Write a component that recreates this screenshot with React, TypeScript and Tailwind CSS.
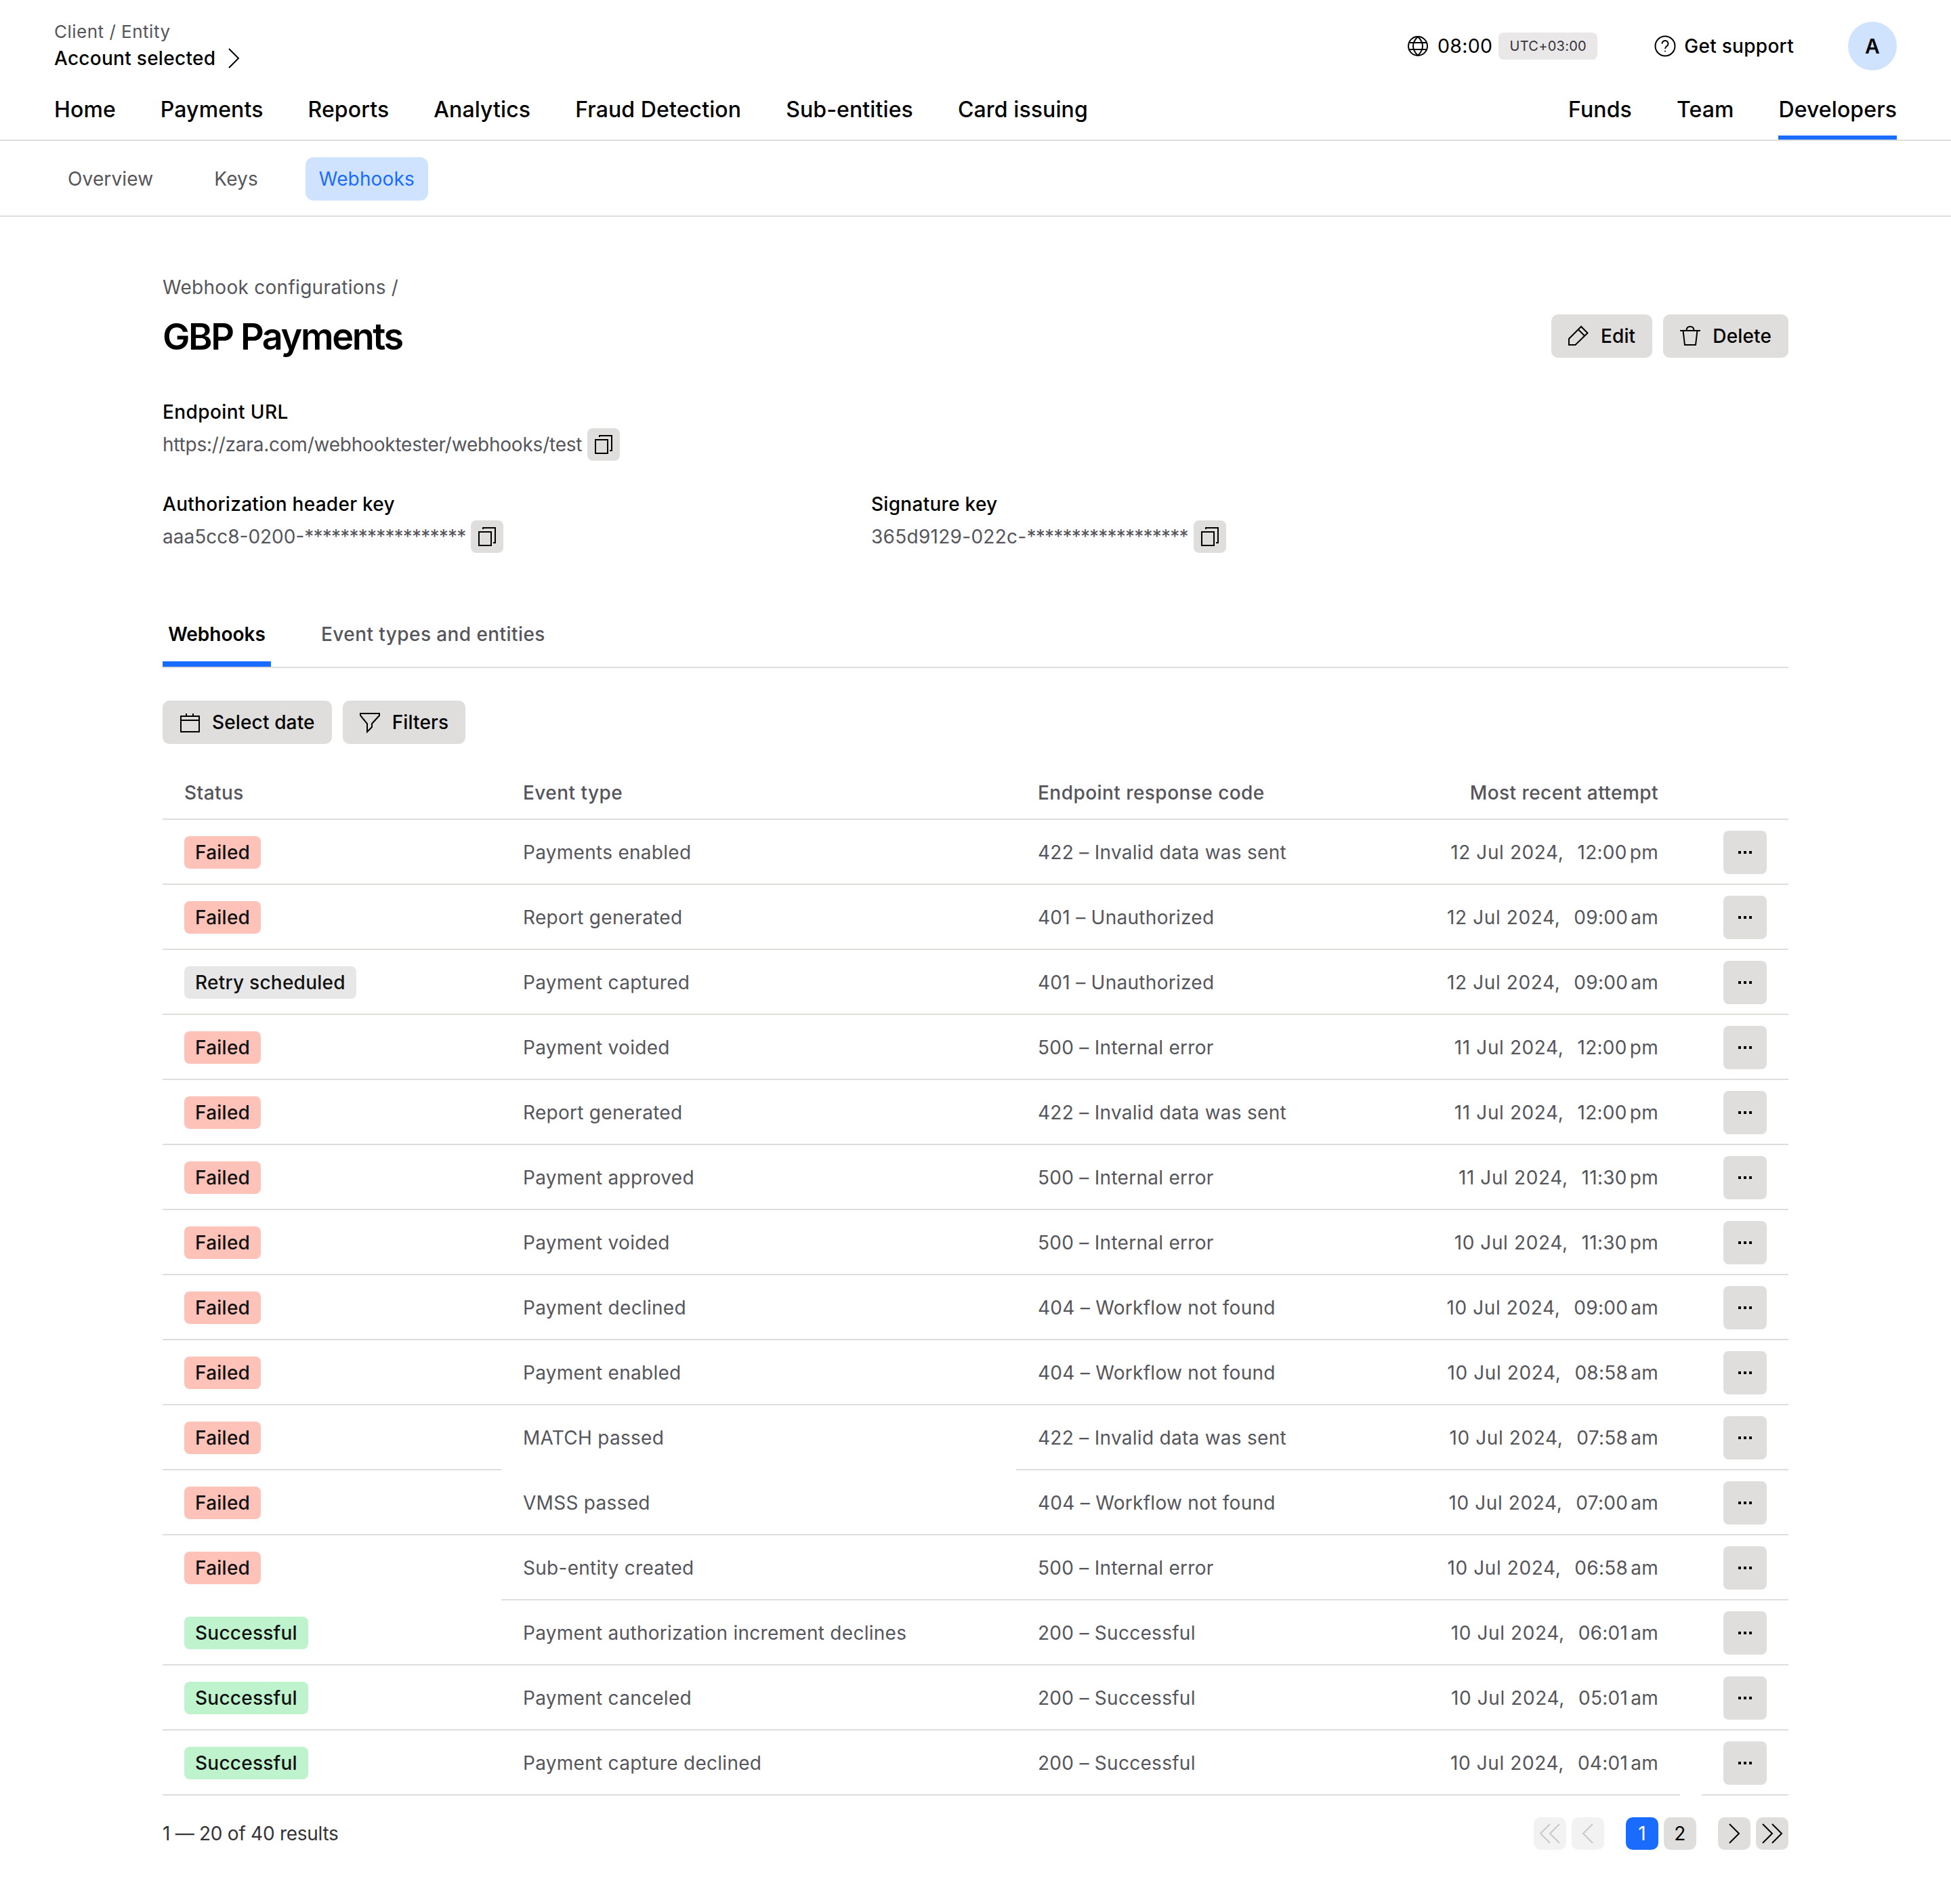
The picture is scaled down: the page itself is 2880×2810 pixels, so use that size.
import React from 'react';

const ChevronRight = ({ className = '' }: { className?: string }) => (
    <svg viewBox="0 0 18 30" fill="none" stroke="currentColor" strokeWidth="2" className={className}>
        <path d="M2 1l14 14L2 29" />
    </svg>
);

const ChevronLeft = ({ className = '' }: { className?: string }) => (
    <svg viewBox="0 0 18 30" fill="none" stroke="currentColor" strokeWidth="2" className={className}>
        <path d="M16 1 2 15l14 14" />
    </svg>
);

const DoubleRight = ({ className = '' }: { className?: string }) => (
    <svg viewBox="0 0 32 30" fill="none" stroke="currentColor" strokeWidth="2" className={className}>
        <path d="M2 1l14 14L2 29M16 1l14 14-14 14" />
    </svg>
);

const DoubleLeft = ({ className = '' }: { className?: string }) => (
    <svg viewBox="0 0 32 30" fill="none" stroke="currentColor" strokeWidth="2" className={className}>
        <path d="M16 1 2 15l14 14M30 1 16 15l14 14" />
    </svg>
);

const CopyIcon = () => (
    <svg viewBox="0 0 32 32" fill="none" stroke="currentColor" strokeWidth="2" className="w-8 h-8 text-black">
        <rect x="4" y="9" width="18" height="20" />
        <path d="M10 5V3h18v22h-3" />
    </svg>
);

const GlobeIcon = () => (
    <svg viewBox="0 0 30 30" fill="none" stroke="currentColor" strokeWidth="2" className="w-[30px] h-[30px]">
        <circle cx="15" cy="15" r="14" />
        <path d="M15 1C10 6 8 10 8 15s2 9 7 14c5-5 7-9 7-14s-2-9-7-14zM2 10h26M2 20h26" />
    </svg>
);

const HelpIcon = () => (
    <svg viewBox="0 0 32 32" fill="none" stroke="currentColor" strokeWidth="2" className="w-8 h-8">
        <circle cx="16" cy="16" r="14.5" />
        <path d="M11.5 12.5a4.5 4.5 0 1 1 7 3.7c-1.6 1-2.5 2-2.5 3.8" />
        <circle cx="16" cy="23.5" r="1" fill="currentColor" stroke="none" />
    </svg>
);

const PencilIcon = () => (
    <svg viewBox="0 0 32 32" fill="none" stroke="currentColor" strokeWidth="2" className="w-8 h-8">
        <path d="M2 20 20 2l9.5 9.5L11.5 29H2zM16 6.5l9 9" />
    </svg>
);

const TrashIcon = () => (
    <svg viewBox="0 0 32 32" fill="none" stroke="currentColor" strokeWidth="2" className="w-8 h-8">
        <path d="M1 8h30M5.5 8l2.5 21h16l2.5-21M10.5 8c0-3.5 2-6 5.5-6s5.5 2.5 5.5 6" />
    </svg>
);

const CalendarIcon = () => (
    <svg viewBox="0 0 32 32" fill="none" stroke="currentColor" strokeWidth="2" className="w-8 h-8">
        <rect x="3" y="7" width="27" height="23" />
        <path d="M3 13h27M11 3v4M21 3v4" />
    </svg>
);

const FunnelIcon = () => (
    <svg viewBox="0 0 32 32" fill="none" stroke="currentColor" strokeWidth="2" className="w-8 h-8">
        <path d="M2 3h28v3L19 18v5l-7 7V18L2 6z" />
    </svg>
);

type Row = { status: string; event: string; code: string; date: string; time: string; ap: string };

const rows: Row[] = [
    { status: 'Failed', event: 'Payments enabled', code: '422 – Invalid data was sent', date: '12 Jul 2024,', time: '12:00', ap: 'pm' },
    { status: 'Failed', event: 'Report generated', code: '401 – Unauthorized', date: '12 Jul 2024,', time: '09:00', ap: 'am' },
    { status: 'Retry scheduled', event: 'Payment captured', code: '401 – Unauthorized', date: '12 Jul 2024,', time: '09:00', ap: 'am' },
    { status: 'Failed', event: 'Payment voided', code: '500 – Internal error', date: '11 Jul 2024,', time: '12:00', ap: 'pm' },
    { status: 'Failed', event: 'Report generated', code: '422 – Invalid data was sent', date: '11 Jul 2024,', time: '12:00', ap: 'pm' },
    { status: 'Failed', event: 'Payment approved', code: '500 – Internal error', date: '11 Jul 2024,', time: '11:30', ap: 'pm' },
    { status: 'Failed', event: 'Payment voided', code: '500 – Internal error', date: '10 Jul 2024,', time: '11:30', ap: 'pm' },
    { status: 'Failed', event: 'Payment declined', code: '404 – Workflow not found', date: '10 Jul 2024,', time: '09:00', ap: 'am' },
    { status: 'Failed', event: 'Payment enabled', code: '404 – Workflow not found', date: '10 Jul 2024,', time: '08:58', ap: 'am' },
    { status: 'Failed', event: 'MATCH passed', code: '422 – Invalid data was sent', date: '10 Jul 2024,', time: '07:58', ap: 'am' },
    { status: 'Failed', event: 'VMSS passed', code: '404 – Workflow not found', date: '10 Jul 2024,', time: '07:00', ap: 'am' },
    { status: 'Failed', event: 'Sub-entity created', code: '500 – Internal error', date: '10 Jul 2024,', time: '06:58', ap: 'am' },
    { status: 'Successful', event: 'Payment authorization increment declines', code: '200 – Successful', date: '10 Jul 2024,', time: '06:01', ap: 'am' },
    { status: 'Successful', event: 'Payment canceled', code: '200 – Successful', date: '10 Jul 2024,', time: '05:01', ap: 'am' },
    { status: 'Successful', event: 'Payment capture declined', code: '200 – Successful', date: '10 Jul 2024,', time: '04:01', ap: 'am' },
];

const badgeClass = (status: string) => {
    if (status === 'Failed') return 'bg-[#ffc2b8]';
    if (status === 'Successful') return 'bg-[#bff3cd]';
    return 'bg-[#e8e7e7]';
};

const leftNav = ['Home', 'Payments', 'Reports', 'Analytics', 'Fraud Detection', 'Sub-entities', 'Card issuing'];

const ActionButton = ({ icon, label }: { icon: React.ReactNode; label: string }) => (
    <button className="h-16 pl-6 pr-[25px] flex items-center gap-[17px] bg-[#dfdedc] rounded-[10px] font-medium tracking-[0.14px] text-black">
        {icon}
        <span>{label}</span>
    </button>
);

const CopyButton = () => (
    <button className="w-12 h-12 flex items-center justify-center bg-[#dfdedc] rounded-[8px]">
        <CopyIcon />
    </button>
);

const PageButton = ({ children, className }: { children: React.ReactNode; className: string }) => (
    <button className={`w-12 h-12 flex items-center justify-center rounded-[10px] ${className}`}>{children}</button>
);

export default function App() {
    return (
        <div className="min-h-[2810px] bg-white text-[28px] leading-10 tracking-[0.01em] text-[#55555c] font-['Inter',sans-serif]">
            {/* Top header */}
            <header className="border-b-2 border-[#dfdedd] px-20">
                <div className="h-[124px] flex items-start justify-between">
                    <div className="pt-[29px]">
                        <div className="text-[26px] leading-9 tracking-[0.5px]">Client / Entity</div>
                        <div className="flex items-center gap-[18px] mt-px text-black font-medium">
                            <span>Account selected</span>
                            <ChevronRight className="w-[18px] h-[30px]" />
                        </div>
                    </div>
                    <div className="pt-8 h-[104px] flex items-center text-black">
                        <GlobeIcon />
                        <span className="ml-[14px] text-[28.5px]">08:00</span>
                        <span className="ml-[9px] w-[146px] h-10 flex items-center justify-center bg-[#e9e7e7] rounded-[8px] text-[20px] text-[#333338]">UTC+03:00</span>
                        <span className="ml-[84px]"><HelpIcon /></span>
                        <span className="ml-3 font-medium">Get support</span>
                        <span className="ml-[80px] w-[72px] h-[72px] rounded-full bg-[#cfe3ff] flex items-center justify-center font-semibold text-[30px]">A</span>
                    </div>
                </div>
                <nav className="flex justify-between text-[32px] font-medium tracking-[0.11px] text-black">
                    <div className="flex gap-[66px]">
                        {leftNav.map((item) => (
                            <a key={item} className="py-[18px] border-b-[6px] border-transparent">{item}</a>
                        ))}
                    </div>
                    <div className="flex gap-[66px]">
                        <a className="py-[18px] border-b-[6px] border-transparent">Funds</a>
                        <a className="py-[18px] border-b-[6px] border-transparent">Team</a>
                        <a className="py-[18px] border-b-[6px] border-[#1a6bff]">Developers</a>
                    </div>
                </nav>
            </header>

            {/* Sub nav */}
            <div className="h-[112px] border-b-2 border-[#dfdedd] px-20 pt-6 flex items-start gap-[50px] tracking-[0.14px]">
                <a className="h-16 px-5 flex items-center">Overview</a>
                <a className="h-16 px-5 flex items-center">Keys</a>
                <a className="h-16 px-5 flex items-center bg-[#cfe3ff] text-[#1a6bff] rounded-[12px]">Webhooks</a>
            </div>

            <main className="px-[240px] pt-[84px] pb-20">
                <div>Webhook configurations /</div>

                <div className="mt-5 h-16 flex items-center justify-between">
                    <h1 className="pt-[2px] text-[54px] leading-[64px] font-semibold tracking-[-2.4px] text-black">GBP Payments</h1>
                    <div className="flex gap-4">
                        <ActionButton icon={<PencilIcon />} label="Edit" />
                        <ActionButton icon={<TrashIcon />} label="Delete" />
                    </div>
                </div>

                <div className="mt-[60px] font-medium tracking-[0.4px] text-black">Endpoint URL</div>
                <div className="mt-1 flex items-center gap-2">
                    <span className="tracking-[-0.22px]">https://zara.com/webhooktester/webhooks/test</span>
                    <CopyButton />
                </div>

                <div className="mt-11 flex">
                    <div className="w-[1046px]">
                        <div className="font-medium text-black">Authorization header key</div>
                        <div className="mt-1 flex items-center gap-2">
                            <span className="tracking-normal">
                                aaa5cc8-0200-<span className="tracking-[-0.8px]">******************</span>
                            </span>
                            <CopyButton />
                        </div>
                    </div>
                    <div>
                        <div className="font-medium text-black">Signature key</div>
                        <div className="mt-1 flex items-center gap-2">
                            <span>
                                365d9129-022c-<span className="tracking-[-0.8px]">******************</span>
                            </span>
                            <CopyButton />
                        </div>
                    </div>
                </div>

                {/* Tabs */}
                <div className="mt-20 flex gap-16 border-b-2 border-[#dfdedd] h-[90px]">
                    <a className="h-[88px] w-40 text-center pt-5 border-b-8 border-[#1a6bff] font-semibold tracking-normal text-black">Webhooks</a>
                    <a className="h-[88px] px-[10px] pt-5 font-medium tracking-[0.42px]">Event types and entities</a>
                </div>

                <div className="mt-12 flex gap-4">
                    <ActionButton icon={<CalendarIcon />} label="Select date" />
                    <ActionButton icon={<FunnelIcon />} label="Filters" />
                </div>

                {/* Table */}
                <table className="mt-8 w-full table-fixed border-separate border-spacing-0">
                    <colgroup>
                        <col className="w-[500px]" />
                        <col className="w-[760px]" />
                        <col className="w-[600px]" />
                        <col className="w-[380px]" />
                        <col className="w-8" />
                        <col className="w-[128px]" />
                    </colgroup>
                    <thead>
                        <tr className="h-20 text-left tracking-[0.45px]">
                            <th className="pl-8 pt-[2px] font-medium border-b-2 border-[#dfdedd]">Status</th>
                            <th className="pl-8 pt-[2px] font-medium border-b-2 border-[#dfdedd]">Event type</th>
                            <th className="pl-8 pt-[2px] font-medium border-b-2 border-[#dfdedd]">Endpoint response code</th>
                            <th className="pr-8 pt-[2px] font-medium text-right whitespace-nowrap border-b-2 border-[#dfdedd]">Most recent attempt</th>
                            <th className="border-b-2 border-[#dfdedd]"></th>
                            <th className="border-b-2 border-[#dfdedd]"></th>
                        </tr>
                    </thead>
                    <tbody>
                        {rows.map((row, i) => (
                            <tr key={i} className="h-24">
                                <td className={`pl-8 pt-[2px] border-b-2 ${i === 11 ? 'border-transparent' : 'border-[#dfdedd]'}`}>
                                    <span className={`inline-flex h-12 items-center px-4 rounded-[8px] font-medium tracking-[0.25px] text-[#111] align-middle ${badgeClass(row.status)}`}>
                                        {row.status}
                                    </span>
                                </td>
                                <td className={`pl-8 pt-[2px] border-b-2 ${i === 9 ? 'border-transparent' : 'border-[#dfdedd]'}`}>{row.event}</td>
                                <td className="pl-8 pt-[2px] border-b-2 border-[#dfdedd]">{row.code}</td>
                                <td className="pr-8 pt-[2px] border-b-2 border-[#dfdedd] whitespace-nowrap">
                                    <div className="flex justify-end">
                                        <span className="tracking-[0.6px]">{row.date}</span>
                                        <span className="ml-[20px]">{row.time}</span>
                                        <span className="ml-1">{row.ap}</span>
                                    </div>
                                </td>
                                <td className={`border-b-2 ${i === rows.length - 1 ? 'border-transparent' : 'border-[#dfdedd]'}`}></td>
                                <td className="pt-[2px] border-b-2 border-[#dfdedd]">
                                    <div className="flex justify-center">
                                        <button className="w-16 h-16 flex items-center justify-center bg-[#dfdedc] rounded-[8px]">
                                            <svg viewBox="0 0 20 4" className="w-5 h-1 fill-black">
                                                <rect x="0" y="0" width="4" height="4" />
                                                <rect x="8" y="0" width="4" height="4" />
                                                <rect x="16" y="0" width="4" height="4" />
                                            </svg>
                                        </button>
                                    </div>
                                </td>
                            </tr>
                        ))}
                    </tbody>
                </table>

                {/* Pagination */}
                <div className="mt-8 flex items-center justify-between">
                    <span className="tracking-[-0.27px] text-[#333338]">1 — 20 of 40 results</span>
                    <div className="flex items-center">
                        <PageButton className="bg-[#f3f2f2] text-[#c9c8c8]"><DoubleLeft className="w-8 h-[30px]" /></PageButton>
                        <PageButton className="ml-2 bg-[#f3f2f2] text-[#c9c8c8]"><ChevronLeft className="w-[18px] h-[30px]" /></PageButton>
                        <PageButton className="ml-8 bg-[#1a6bff] text-white">1</PageButton>
                        <PageButton className="ml-2 bg-[#dfdedc] text-black">2</PageButton>
                        <PageButton className="ml-8 bg-[#dfdedc] text-black"><ChevronRight className="w-[18px] h-[30px]" /></PageButton>
                        <PageButton className="ml-2 bg-[#dfdedc] text-black"><DoubleRight className="w-8 h-[30px]" /></PageButton>
                    </div>
                </div>
            </main>
        </div>
    );
}
